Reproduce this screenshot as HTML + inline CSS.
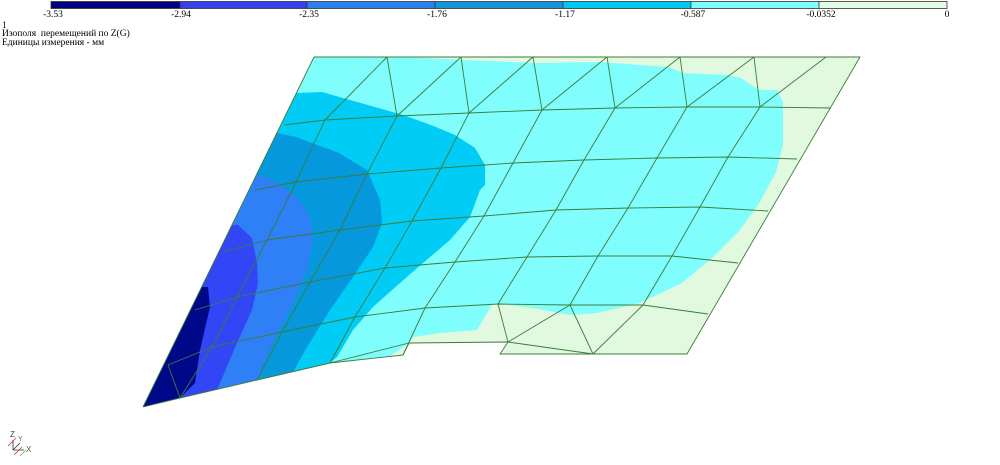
<!DOCTYPE html>
<html><head><meta charset="utf-8"><style>
html,body{margin:0;padding:0;background:#fff;width:1000px;height:465px;overflow:hidden}
svg{display:block}
text{font-family:"Liberation Serif","DejaVu Serif",serif;font-size:9.5px;fill:#000}
</style></head><body>
<svg width="1000" height="465" viewBox="0 0 1000 465" xmlns="http://www.w3.org/2000/svg">
<rect x="51" y="1.5" width="129" height="7" fill="#00007e"/>
<rect x="180" y="1.5" width="127" height="7" fill="#3440ec"/>
<rect x="307" y="1.5" width="128" height="7" fill="#2b80ee"/>
<rect x="435" y="1.5" width="128" height="7" fill="#1494d8"/>
<rect x="563" y="1.5" width="128" height="7" fill="#00c6f0"/>
<rect x="691" y="1.5" width="128" height="7" fill="#80ffff"/>
<rect x="819" y="1.5" width="128" height="7" fill="#e6fbe4"/>
<g stroke="#333" stroke-width="0.8" fill="none">
<rect x="51" y="1.5" width="896" height="7"/>
<path d="M180 1.5V8.5M307 1.5V8.5M435 1.5V8.5M563 1.5V8.5M691 1.5V8.5M819 1.5V8.5"/>
</g>
<g text-anchor="middle">
<text x="53" y="17">-3.53</text><text x="181" y="17">-2.94</text><text x="309" y="17">-2.35</text>
<text x="437" y="17">-1.76</text><text x="565" y="17">-1.17</text><text x="693" y="17">-0.587</text>
<text x="821" y="17">-0.0352</text><text x="947" y="17">0</text>
</g>
<text x="2" y="28">1</text>
<text x="2" y="36" xml:space="preserve">Изополя  перемещений по Z(G)</text>
<text x="2" y="45">Единицы измерения - мм</text>

<defs>
<clipPath id="c">
<path d="M314 57 L860 57 L687 354 L500 354 L508 342 L409 343 L403 355 L330 363 L257 380 L180 398 L143 407 Z"/>
</clipPath>
</defs>
<g clip-path="url(#c)">
<rect x="100" y="40" width="800" height="400" fill="#e1f9df"/>
<path fill="#80fdfd" d="M300 40 L387 56 L461 60 L538 63 L598 62 L669 67 L683 73 L727 75 L741 78 L759 90 L777 90 L783 102 L783 145 L776 172 L760 202 L740 230 L712 258 L682 283 L640 303 L597 313 L570 315 L533 308 L493 303 L487 313 L477 330 L440 333 L413 337 L409 343 L300 420 L100 420 Z"/>
<path fill="#00ccf5" d="M100 93 L298 93 L322 92 L343 98 L403 115 L431 125 L455 135 L475 148 L485 165 L485 185 L480 190 L470 217 L450 240 L423 263 L400 283 L373 307 L353 330 L337 357 L330 363 L100 420 Z"/>
<path fill="#0598dd" d="M100 131 L268 131 L296 137 L339 153 L367 170 L380 200 L382 223 L373 247 L353 277 L330 310 L307 347 L293 372 L280 400 L100 420 Z"/>
<path fill="#2f7ff7" d="M100 175 L260 175 L277 183 L297 197 L310 217 L313 237 L307 270 L293 303 L273 343 L257 380 L250 400 L100 420 Z"/>
<path fill="#3346f5" d="M100 225 L238 225 L252 238 L257 263 L258 283 L252 310 L237 343 L217 390 L213 400 L100 420 Z"/>
<path fill="#00088a" d="M100 287 L208 287 L210 307 L200 350 L195 383 L180 398 L170 420 L100 420 Z"/>
</g>

<g stroke="#3a7d3a" stroke-width="0.9" fill="none" stroke-linejoin="round">
<path d="M143 407 L314 57 L860 57 L687 354 L500 354 L508 342 L409 343 L403 355 L330 363 L257 380 L180 398 L143 407"/>
<path d="M409 343 L330 363"/>
<path d="M284 125 L325 120 L397 116 L469 113 L542 110 L615 108 L687 107 L760 107 L831 108"/>
<path d="M255 190 L296 182 L367 174 L441 168 L513 163 L584 160 L657 158 L728 157 L797 159"/>
<path d="M223 252 L267 240 L340 230 L412 221 L484 216 L556 210 L628 208 L700 207 L768 211"/>
<path d="M195 310 L237 297 L310 282 L385 268 L455 262 L527 257 L598 256 L672 256 L738 263"/>
<path d="M168 365 L212 347 L282 332 L355 317 L425 308 L498 304 L570 305 L643 305 L708 314"/>
<path d="M387 57 L397 116 M461 57 L469 113 M533 57 L542 110 M607 57 L615 108 M680 57 L687 107 M754 57 L760 107"/>
<path d="M325 120 L387 57 M397 116 L461 57 M469 113 L533 57 M542 110 L607 57 M615 108 L680 57 M687 107 L754 57 M760 107 L826 57"/>
<path d="M325 120 L296 182 L267 240 L237 297 L212 347 L180 398"/>
<path d="M397 116 L367 174 L340 230 L310 282 L282 332 L257 380"/>
<path d="M469 113 L441 168 L412 221 L385 268 L355 317 L330 363"/>
<path d="M542 110 L513 163 L484 216 L455 262 L425 308 L403 355"/>
<path d="M615 108 L584 160 L556 210 L527 257 L498 304 L508 342"/>
<path d="M687 107 L657 158 L628 208 L598 256 L570 305 L593 354"/>
<path d="M760 107 L728 157 L700 207 L672 256 L643 305 L593 354"/>
<path d="M570 305 L508 342 L593 354"/>
<path d="M168 365 L180 398"/>
</g>

<text x="10" y="437" style="font-family:'Liberation Sans',sans-serif;font-size:8px;fill:#444">Z</text>
<text x="18" y="441" style="font-family:'Liberation Sans',sans-serif;font-size:7px;fill:#666">Y</text>
<text x="26" y="452" style="font-family:'Liberation Sans',sans-serif;font-size:8px;fill:#555">X</text>
<g stroke-width="0.8" fill="none">
<path d="M13 450 L13 440 M13 450 L24 450 M13 450 L20 443" stroke="#333"/>
<path d="M8 446 L16 438 M14 455 L22 447" stroke="#c33"/>
<path d="M20 456 L26 450" stroke="#6a6"/>
</g>
</svg>
</body></html>
